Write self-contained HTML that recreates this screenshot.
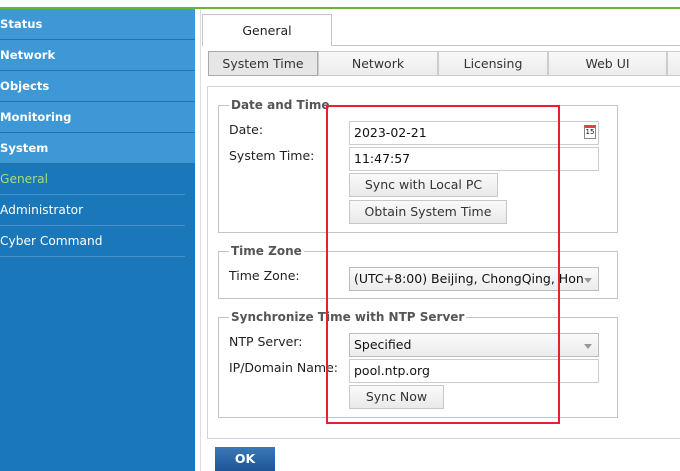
<!DOCTYPE html>
<html><head><meta charset="utf-8"><style>
*{box-sizing:border-box;margin:0;padding:0}
body{width:680px;height:471px;overflow:hidden;background:#fff;font-family:"DejaVu Sans","Liberation Sans",sans-serif;font-size:12px;color:#222;position:relative}
.a{position:absolute}
.top{left:0;top:7px;width:680px;height:2px;background:#6cb42c}
.side{left:0;top:9px;width:195px;height:462px;background:#1a77b9}
.m{position:absolute;left:0;width:195px;height:31px;background:#3e98d5;border-bottom:1px solid #2a6fa8;color:#fff;font-weight:bold;font-size:11.6px;line-height:31px}
.s{position:absolute;left:0;width:185px;height:31px;border-bottom:1px solid #4a90c8;color:#fff;font-size:12.2px;line-height:31px}
.tab{position:absolute;top:51px;height:25px;background:linear-gradient(#f8f8f8,#ececec);border:1px solid #ccc;text-align:center;line-height:23px;color:#333;font-size:12.5px}
.box{border:1px solid #c4c4c8}
.lg{position:absolute;background:#fff;padding:0 2px;font-weight:bold;color:#555;font-size:12px}
.lb{position:absolute;font-size:12.5px;color:#222}
.in{position:absolute;left:349px;width:250px;height:24px;border:1px solid #ccc;background:#fff;padding-left:4px;line-height:22px;font-size:12.5px;color:#111}
.sel{background:linear-gradient(#fafafa,#ececec);border-color:#bbb}
.sel:after{content:"";position:absolute;right:6px;top:10px;border:4px solid transparent;border-top:5px solid #999}
.bt{position:absolute;left:349px;height:24px;border:1px solid #c8c8c8;background:linear-gradient(#fafafa,#e9e9e9);text-align:center;line-height:22px;color:#333;font-size:12.5px}
</style></head><body>
<div class="a top"></div>
<div class="a side"></div>
<div class="m" style="top:9px">Status</div>
<div class="m" style="top:40px">Network</div>
<div class="m" style="top:71px">Objects</div>
<div class="m" style="top:102px">Monitoring</div>
<div class="m" style="top:133px">System</div>
<div class="s" style="top:164px;color:#a8dc78">General</div>
<div class="s" style="top:195px">Administrator</div>
<div class="s" style="top:226px">Cyber Command</div>
<div class="a" style="left:200px;top:9px;width:1px;height:462px;background:#ddd"></div>
<div class="a" style="left:331px;top:45px;width:349px;height:1px;background:#c4c4c4"></div>
<div class="a" style="left:202px;top:14px;width:130px;height:32px;border:1px solid #c4c4c4;border-bottom:none;background:#fff;text-align:center;line-height:32px;font-size:12.5px">General</div>
<div class="tab" style="left:208px;width:110px;background:#e6e6e6;border-color:#aaa">System Time</div>
<div class="tab" style="left:318px;width:120px">Network</div>
<div class="tab" style="left:438px;width:110px">Licensing</div>
<div class="tab" style="left:548px;width:119px">Web UI</div>
<div class="tab" style="left:667px;width:30px"></div>
<div class="a box" style="left:207px;top:86px;width:480px;height:353px;border-color:#d4d4d4"></div>
<div class="a box" style="left:218px;top:105px;width:400px;height:128px"></div>
<div class="lg" style="left:229px;top:98px">Date and Time</div>
<div class="lb" style="left:229px;top:122px">Date:</div>
<div class="lb" style="left:229px;top:148px">System Time:</div>
<div class="in" style="top:121px">2023-02-21<span style="position:absolute;right:2px;top:3px;width:12px;height:14px;border:1px solid #888;border-top:3px solid #d44;font-size:7px;line-height:9px;text-align:center">15</span></div>
<div class="in" style="top:147px">11:47:57</div>
<div class="bt" style="top:173px;width:149px">Sync with Local PC</div>
<div class="bt" style="top:200px;width:158px">Obtain System Time</div>
<div class="a box" style="left:218px;top:251px;width:400px;height:48px"></div>
<div class="lg" style="left:229px;top:244px">Time Zone</div>
<div class="lb" style="left:229px;top:268px">Time Zone:</div>
<div class="in sel" style="top:267px;overflow:hidden;white-space:nowrap">(UTC+8:00) Beijing, ChongQing, Hon</div>
<div class="a box" style="left:218px;top:317px;width:400px;height:101px"></div>
<div class="lg" style="left:229px;top:310px">Synchronize Time with NTP Server</div>
<div class="lb" style="left:229px;top:334px">NTP Server:</div>
<div class="lb" style="left:229px;top:360px">IP/Domain Name:</div>
<div class="in sel" style="top:333px">Specified</div>
<div class="in" style="top:359px">pool.ntp.org</div>
<div class="bt" style="top:385px;width:95px">Sync Now</div>
<div class="a" style="left:326px;top:105px;width:234px;height:319px;border:2px solid #e8202a"></div>
<div class="a" style="left:215px;top:447px;width:60px;height:24px;background:linear-gradient(#3b78b8,#1d5596);color:#fff;font-weight:bold;text-align:center;line-height:24px;font-size:12.5px">OK</div>
</body></html>
